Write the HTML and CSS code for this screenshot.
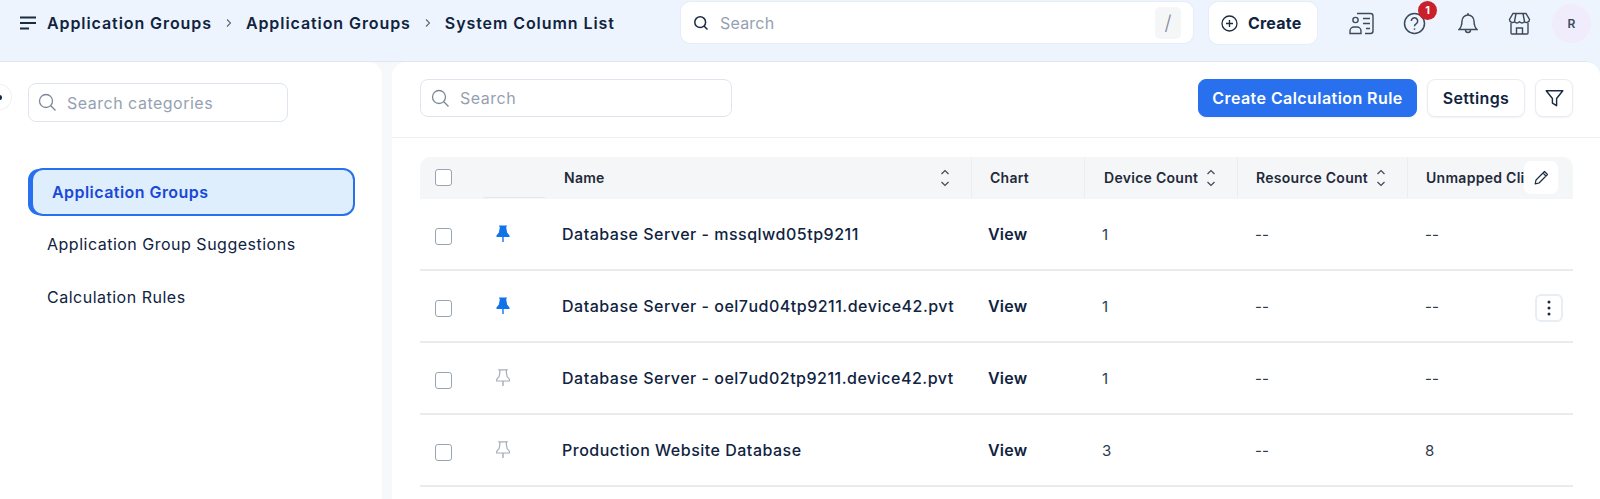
FILE: index.html
```html
<!DOCTYPE html>
<html lang="en">
<head>
<meta charset="utf-8">
<title>Application Groups</title>
<link rel="stylesheet" href="styles.css">
</head>
<body>
<header class="topbar">
  <div class="crumbs">
    <svg class="menu-icon" width="18" height="16" viewBox="0 0 18 16"><path d="M1 2.500h16M1 8h16M1 13.500h9" fill="none" stroke="#1c2b40" stroke-width="2"/></svg>
    <span class="crumb">Application Groups</span>
    <svg class="crumb-sep" width="8" height="10" viewBox="0 0 8 10"><path d="M2 1.500 5.500 5 2 8.500" fill="none" stroke="#5b6878" stroke-width="1.100"/></svg>
    <span class="crumb">Application Groups</span>
    <svg class="crumb-sep" width="8" height="10" viewBox="0 0 8 10"><path d="M2 1.500 5.500 5 2 8.500" fill="none" stroke="#5b6878" stroke-width="1.100"/></svg>
    <span class="crumb">System Column List</span>
  </div>
  <div class="global-search">
    <svg width="16" height="16" viewBox="0 0 16 16"><circle cx="7.200" cy="7.200" r="5.400" fill="none" stroke="#1c2b40" stroke-width="1.500"/><path d="m11 11 3.500 3.500" stroke="#1c2b40" stroke-width="1.500"/></svg>
    <span class="global-search-text">Search</span>
    <span class="slash">/</span>
  </div>
  <div class="create">
    <svg width="17" height="17" viewBox="0 0 17 17"><circle cx="8.500" cy="8.500" r="7.500" fill="none" stroke="#1c2b40" stroke-width="1.300"/><path d="M8.500 5v7M5 8.500h7" stroke="#1c2b40" stroke-width="1.300"/></svg>
    <span>Create</span>
  </div>
  <div class="top-icons">
    <svg class="ic-contact" width="25" height="23" viewBox="0 0 25 23" fill="none" stroke="#3c4a5b" stroke-width="1.400"><path d="M8 1.500h13.500a2.500 2.500 0 0 1 2.500 2.500v15a2.500 2.500 0 0 1-2.500 2.500H16"/><path d="M14 6.500h7M14 11.500h7M17 16.500h4"/><circle cx="6.500" cy="8" r="2.600"/><path d="M1 21.500v-2.500a4 4 0 0 1 4-4h3a4 4 0 0 1 4 4v2.500z"/></svg>
    <span class="help">
      <svg width="23" height="23" viewBox="0 0 23 23" fill="none" stroke="#3c4a5b" stroke-width="1.500"><circle cx="11.500" cy="11.500" r="10"/><path d="M8.300 9a3.200 3.200 0 1 1 4.800 2.800c-1 .6-1.600 1.200-1.600 2.400"/><path d="M11.500 16.400v1.400"/></svg>
      <span class="badge">1</span>
    </span>
    <svg class="ic-bell" width="20" height="23" viewBox="0 0 20 23" fill="none" stroke="#3c4a5b" stroke-width="1.400"><path d="M10 3a6 6 0 0 0-6 6c0 5-1 6.500-3 8.500h18c-2-2-3-3.500-3-8.500a6 6 0 0 0-6-6z"/><path d="M10 1v2M7.500 18a2.500 2.500 0 0 0 5 0"/></svg>
    <svg class="ic-store" width="23" height="23" viewBox="0 0 23 23" fill="none" stroke="#3c4a5b" stroke-width="1.400"><path d="M5 1.500h13l3.500 6a3 3 0 0 1-5 2.200 3.600 3.600 0 0 1-5 0 3.600 3.600 0 0 1-5 0 3 3 0 0 1-5-2.200z"/><path d="M8 1.500 6.500 9.500M15 1.500l1.500 8M3 11v10a1 1 0 0 0 1 1h15a1 1 0 0 0 1-1V11"/><path d="M8.500 22v-6h6v6"/></svg>
    <span class="avatar">R</span>
  </div>
</header>

<div class="workspace">
  <aside class="sidebar">
    <span class="collapse-handle"><span class="collapse-dot"></span></span>
    <div class="field side-search">
      <svg width="19" height="19" viewBox="0 0 19 19"><circle cx="8" cy="8" r="6.500" fill="none" stroke="#7c8898" stroke-width="1.300"/><path d="m12.800 12.800 4.700 4.700" stroke="#7c8898" stroke-width="1.300"/></svg>
      <span>Search categories</span>
    </div>
    <nav class="side-nav">
      <a class="side-item active">Application Groups</a>
      <a class="side-item">Application Group Suggestions</a>
      <a class="side-item">Calculation Rules</a>
    </nav>
  </aside>

  <main class="content">
    <div class="toolbar">
      <div class="field main-search">
        <svg width="19" height="19" viewBox="0 0 19 19"><circle cx="8" cy="8" r="6.500" fill="none" stroke="#7c8898" stroke-width="1.300"/><path d="m12.800 12.800 4.700 4.700" stroke="#7c8898" stroke-width="1.300"/></svg>
        <span>Search</span>
      </div>
      <button class="btn primary">Create Calculation Rule</button>
      <button class="btn settings">Settings</button>
      <button class="btn filter"><svg width="21" height="21" viewBox="0 0 19 19"><path d="M2 2.500h15l-5.600 7v6.500l-3.800-2.400V9.500z" fill="none" stroke="#1c2b40" stroke-width="1.300" stroke-linejoin="round"/></svg></button>
    </div>

    <div class="table">
      <div class="row head">
        <div class="cell"><span class="check"></span></div>
        <div class="cell pin-head"></div>
        <div class="cell th name-th"><span>Name</span><svg class="sort push" width="10" height="18" viewBox="0 0 10 18"><path d="M1.500 5 5 1.500 8.500 5M1.500 13 5 16.500 8.500 13" fill="none" stroke="#3c4a5b" stroke-width="1.200"/></svg></div>
        <div class="cell th div chart-th">Chart</div>
        <div class="cell th div"><span>Device Count</span><svg class="sort" width="10" height="18" viewBox="0 0 10 18"><path d="M1.500 5 5 1.500 8.500 5M1.500 13 5 16.500 8.500 13" fill="none" stroke="#3c4a5b" stroke-width="1.200"/></svg></div>
        <div class="cell th div tight"><span>Resource Count</span><svg class="sort" width="10" height="18" viewBox="0 0 10 18"><path d="M1.500 5 5 1.500 8.500 5M1.500 13 5 16.500 8.500 13" fill="none" stroke="#3c4a5b" stroke-width="1.200"/></svg></div>
        <div class="cell th div tight clip">Unmapped Cli</div>
        <span class="edit-btn"><svg width="15" height="15" viewBox="0 0 15 15"><path d="M10.500 1.500 13.500 4.500 5 13l-3.800.8L2 10zM9 3l3 3" fill="none" stroke="#1c2b40" stroke-width="1.200" stroke-linejoin="round"/></svg></span>
      </div>

      <div class="row">
        <div class="cell"><span class="check"></span></div>
        <div class="cell"><svg class="pin" width="14" height="18" viewBox="0 0 14 18"><path d="M3 .5h8l-.8 2 .9 5 2.400 3V12H.5v-1.500l2.400-3 .9-5z" fill="#1173ea"/><path d="M7 12v5" stroke="#1173ea" stroke-width="1.400"/></svg></div>
        <div class="cell name">Database Server - mssqlwd05tp9211</div>
        <div class="cell view">View</div>
        <div class="cell val">1</div>
        <div class="cell val">--</div>
        <div class="cell val">--</div>
      </div>
      <div class="row">
        <div class="cell"><span class="check"></span></div>
        <div class="cell"><svg class="pin" width="14" height="18" viewBox="0 0 14 18"><path d="M3 .5h8l-.8 2 .9 5 2.400 3V12H.5v-1.500l2.400-3 .9-5z" fill="#1173ea"/><path d="M7 12v5" stroke="#1173ea" stroke-width="1.400"/></svg></div>
        <div class="cell name">Database Server - oel7ud04tp9211.device42.pvt</div>
        <div class="cell view">View</div>
        <div class="cell val">1</div>
        <div class="cell val">--</div>
        <div class="cell val">--</div>
        <span class="kebab"><svg width="4" height="16" viewBox="0 0 4 16"><circle cx="2" cy="2" r="1.500" fill="#1c2b40"/><circle cx="2" cy="8" r="1.500" fill="#1c2b40"/><circle cx="2" cy="14" r="1.500" fill="#1c2b40"/></svg></span>
      </div>
      <div class="row">
        <div class="cell"><span class="check"></span></div>
        <div class="cell"><svg class="pin" width="14" height="18" viewBox="0 0 14 18"><path d="M3 .8h8l-.8 1.700.9 5 2.400 3V12H.7v-1.500l2.400-3 .9-5z" fill="none" stroke="#a4adb9" stroke-width="1.200"/><path d="M7 12v5" stroke="#a4adb9" stroke-width="1.400"/></svg></div>
        <div class="cell name">Database Server - oel7ud02tp9211.device42.pvt</div>
        <div class="cell view">View</div>
        <div class="cell val">1</div>
        <div class="cell val">--</div>
        <div class="cell val">--</div>
      </div>
      <div class="row">
        <div class="cell"><span class="check"></span></div>
        <div class="cell"><svg class="pin" width="14" height="18" viewBox="0 0 14 18"><path d="M3 .8h8l-.8 1.700.9 5 2.400 3V12H.7v-1.500l2.400-3 .9-5z" fill="none" stroke="#a4adb9" stroke-width="1.200"/><path d="M7 12v5" stroke="#a4adb9" stroke-width="1.400"/></svg></div>
        <div class="cell name">Production Website Database</div>
        <div class="cell view">View</div>
        <div class="cell val">3</div>
        <div class="cell val">--</div>
        <div class="cell val">8</div>
      </div>
    </div>
  </main>
</div>
</body>
</html>
```

FILE: styles.css
```css
* { box-sizing: border-box; }
html, body { margin: 0; height: 499px; overflow: hidden; }
body {
  font-family: Inter, "Liberation Sans", sans-serif;
  color: #10233f;
  background: #edf4fd;
  font-size: 15px;
}

/* Top bar */
.topbar { height: 61px; display: flex; padding: 2px 8px 0 19px; align-items: flex-start; }
.crumbs { width: 662px; height: 42px; display: flex; align-items: center; flex: none; }
.menu-icon { margin-right: 10px; }
.crumb { font-size: 16px; font-weight: 600; letter-spacing: .92px; color: #10233f; white-space: nowrap; }
.crumb-sep { margin: 0 13px; }

.global-search {
  width: 512px; height: 41px; flex: none;
  background: #fff; border-radius: 9px;
  display: flex; align-items: center;
  padding: 0 12px;
  box-shadow: 0 0 0 1px #e6edf6;
}
.global-search-text { margin-left: 11px; font-size: 16px; color: #95a1b1; flex: 1; letter-spacing: .2px; }
.slash {
  width: 26px; height: 32px; border-radius: 5px; background: #f5f6f8;
  display: flex; align-items: center; justify-content: center;
  color: #7f8a98; font-size: 20px; font-weight: 300;
}
.create {
  margin-left: 16px; width: 108px; height: 42px; flex: none;
  background: #fff; border-radius: 9px;
  display: flex; align-items: center; gap: 10px;
  padding-left: 12px;
  font-size: 16px; font-weight: 700; letter-spacing: .2px;
  box-shadow: 0 0 0 1px #e6edf6;
}
.top-icons { display: flex; align-items: center; margin-left: 32px; height: 42px; flex: none; }
.help { position: relative; display: flex; margin-left: 29px; }
.badge {
  position: absolute; left: 15px; top: -11px;
  width: 19px; height: 19px; border-radius: 50%;
  background: #c9202a; color: #fff;
  font-size: 11px; font-weight: 700;
  display: flex; align-items: center; justify-content: center;
}
.ic-bell { margin-left: 32px; }
.ic-store { margin-left: 30px; }
.avatar {
  margin-left: 21px; width: 39px; height: 39px; border-radius: 50%;
  background: #f1ecfb; color: #3c4a5b;
  font-size: 12px; font-weight: 600;
  display: flex; align-items: center; justify-content: center;
}

/* Workspace */
.workspace { display: flex; height: 438px; gap: 10px; background: #f7f8fa; border-top-right-radius: 16px; border-top: 1px solid #dfe6ef; }
.sidebar {
  width: 382px; flex: none; background: #fff; position: relative;
  border-top-right-radius: 14px;
  padding: 21px 0 0 28px;
}
.collapse-handle {
  position: absolute; left: -11px; top: 23px;
  width: 22px; height: 24px; border-radius: 50%;
  background: #fff; box-shadow: 0 0 0 1px #eef1f5;
  display: flex; align-items: center; justify-content: flex-end; padding-right: 9px;
}
.collapse-dot { width: 4px; height: 5px; border-radius: 50%; background: #10233f; }

.field {
  display: flex; align-items: center; gap: 10px;
  background: #fff; border: 1px solid #dfe5ee; border-radius: 8px;
  padding: 0 9px; color: #95a1b1; font-size: 16px; letter-spacing: .5px;
}
.side-search { width: 260px; height: 39px; }
.side-nav { margin-top: 46px; display: flex; flex-direction: column; }
.side-item { height: 53px; display: flex; align-items: center; padding-left: 19px; font-size: 16px; letter-spacing: .5px; color: #10233f; white-space: nowrap; }
.side-item.active {
  width: 324px; height: 48px; margin: 0 0 1px 3px;
  background: #deeefd; color: #1a48d6; font-weight: 600; letter-spacing: .45px;
  border: 2px solid #2870ee;
  box-shadow: -4px 0 0 -1px #2870ee;
  border-radius: 12px;
  padding-left: 19px;
}

/* Content */
.content { flex: 1; background: #fff; border-top-left-radius: 14px; border-top-right-radius: 14px; min-width: 0; }
.toolbar {
  height: 76px; display: flex; align-items: flex-start;
  padding: 17px 27px 0 28px; border-bottom: 1px solid #eef0f4;
}
.main-search { width: 312px; height: 38px; margin-right: auto; }
.main-search svg { margin-left: 1px; }
.btn {
  height: 38px; border-radius: 8px; font-family: inherit; cursor: pointer;
  display: flex; align-items: center; justify-content: center;
  background: #fff; border: 1px solid #e8ecf2; color: #10233f;
  box-shadow: 0 1px 2px rgba(16, 35, 63, .06);
}
.primary { width: 219px; background: #2870ee; border-color: #2870ee; color: #fff; font-size: 16px; font-weight: 600; letter-spacing: .43px; }
.settings { width: 98px; margin-left: 10px; font-size: 16px; font-weight: 600; letter-spacing: .4px; }
.filter { width: 38px; margin-left: 10px; padding: 0; }

/* Table */
.table { margin: 19px 27px 0 28px; }
.row {
  display: grid; position: relative;
  grid-template-columns: 63px 62px 426px 113px 153px 170px 166px;
  height: 72px; border-bottom: 2px solid #e9ebef;
}
.row.head { height: 42px; padding-bottom: 1px; background: #f5f6f8; border: 0; border-radius: 10px 10px 0 0; }
.cell { display: flex; align-items: center; min-width: 0; }
.cell:first-child { padding-left: 15px; }
.check { width: 17px; height: 17px; border: 1.500px solid #98a4b3; border-radius: 3px; background: #fff; flex: none; }
.row .cell:first-child .check { margin-top: 5px; }
.head .cell:first-child .check { margin-top: 0; }
.pin { margin-left: 13px; }
.pin-head { border-bottom: 1px solid #e3e8ef; }
.th { padding-left: 19px; font-size: 14px; font-weight: 600; color: #1f2a3a; white-space: nowrap; letter-spacing: .28px; }
.chart-th, .tight { padding-left: 18px; }
.div { border-left: 1px solid #ebedf1; }
.sort { margin-left: 8px; flex: none; }
.push { margin-left: auto; margin-right: 21px; }
.clip { overflow: hidden; }
.name { padding-left: 17px; font-size: 16px; font-weight: 550; color: #10233f; letter-spacing: .5px; white-space: nowrap; }
.view { padding-left: 17px; font-size: 16px; font-weight: 600; color: #10233f; letter-spacing: .2px; }
.val { padding-left: 18px; font-size: 15px; color: #2f3b4b; }
.edit-btn {
  position: absolute; right: 15px; top: 4px;
  width: 34px; height: 33px; background: #fff; border-radius: 7px;
  display: flex; align-items: center; justify-content: center;
}
.kebab {
  position: absolute; right: 10px; top: 23px;
  width: 28px; height: 28px; background: #fff; border: 2px solid #e8edf4; border-radius: 6px;
  display: flex; align-items: center; justify-content: center;
}
```
